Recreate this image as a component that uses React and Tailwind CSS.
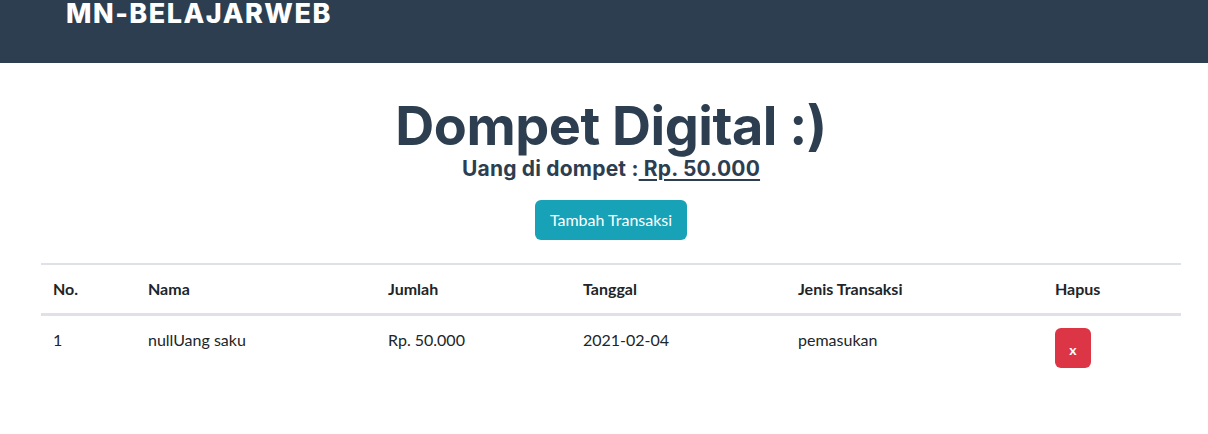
export default function App() {
  const rows = [
    { no: "1", nama: "nullUang saku", jumlah: "Rp. 50.000", tanggal: "2021-02-04", jenis: "pemasukan" },
  ];
  const cols = ["w-[95px]", "w-[240px]", "w-[195px]", "w-[215px]", "w-[257px]", "w-[138px]"];
  return (
    <div className="min-h-[434px] bg-white font-['Lato','Liberation_Sans',sans-serif] text-[#212529]">
      <nav className="flex h-[63px] items-start bg-[#2c3e50] px-[66px]">
        <div className="font-['Inter','Liberation_Sans',sans-serif] text-[27px] font-extrabold leading-[28px] tracking-[1.5px] text-white">
          MN-BELAJARWEB
        </div>
      </nav>
      <div className="ml-[41px] w-[1140px]">
        <div className="flex flex-col items-center pt-[32px]">
          <h1 className="font-['Inter','Liberation_Sans',sans-serif] text-[54px] font-bold leading-[62px] tracking-[-0.5px] text-[#2c3e50]">
            Dompet Digital :)
          </h1>
          <h2 className="font-['Inter','Liberation_Sans',sans-serif] text-[21px] font-bold leading-[24px] tracking-[0.2px] text-[#2c3e50]">
            Uang di dompet :<span className="underline underline-offset-[3px]"> Rp. 50.000</span>
          </h2>
          <button className="mt-[19px] h-[40px] w-[152px] rounded-[6px] bg-[#17a2b8] text-[16px] leading-[24px] text-white">
            Tambah Transaksi
          </button>
        </div>
        <table className="mt-[23px] w-[1140px] border-collapse text-[16px] leading-[24px]">
          <thead>
            <tr className="border-t-2 border-[#dee2e6]">
              {["No.", "Nama", "Jumlah", "Tanggal", "Jenis Transaksi", "Hapus"].map((h, i) => (
                <th key={h} className={`${cols[i]} border-b-[3px] border-[#dee2e6] p-3 text-left font-bold`}>
                  {h}
                </th>
              ))}
            </tr>
          </thead>
          <tbody>
            {rows.map((r) => (
              <tr key={r.no}>
                <td className="p-3 align-top">{r.no}</td>
                <td className="p-3 align-top">{r.nama}</td>
                <td className="p-3 align-top">{r.jumlah}</td>
                <td className="p-3 align-top">{r.tanggal}</td>
                <td className="p-3 align-top">{r.jenis}</td>
                <td className="p-3 align-top">
                  <button className="flex h-[40px] w-[36px] items-center justify-center rounded-[6px] bg-[#dc3545] pt-[3px] text-[14px] font-bold text-white">
                    x
                  </button>
                </td>
              </tr>
            ))}
          </tbody>
        </table>
      </div>
    </div>
  );
}
